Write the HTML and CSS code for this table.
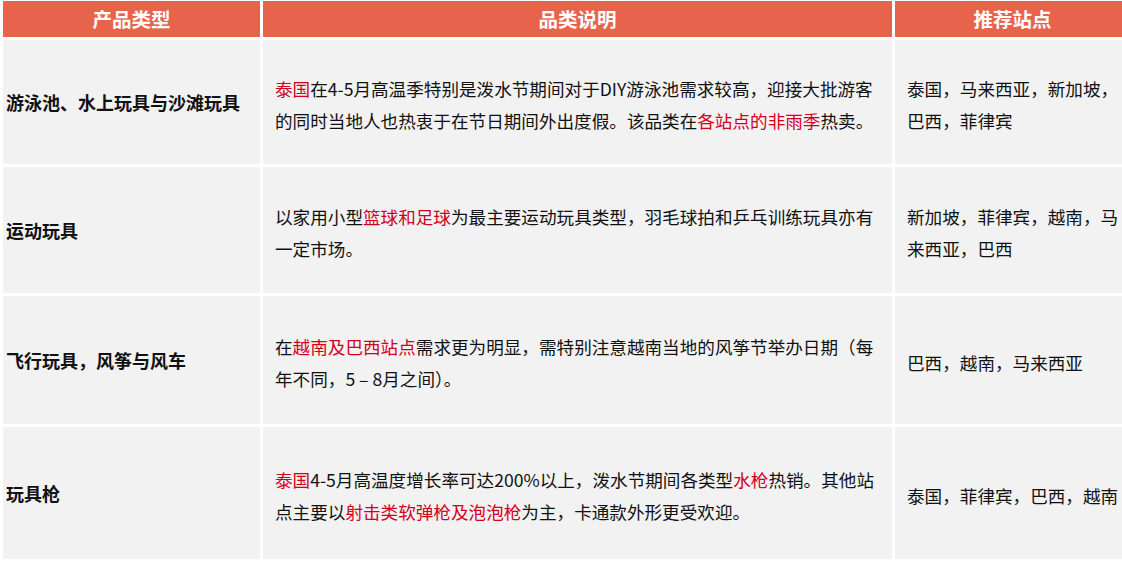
FILE: index.html
```html
<!DOCTYPE html>
<html lang="zh-CN">
<head>
<meta charset="utf-8">
<title>产品类型</title>
<link rel="stylesheet" href="styles.css">
</head>
<body>
<div class="table">
  <div class="th">产品类型</div>
  <div class="th">品类说明</div>
  <div class="th th-last">推荐站点</div>

  <div class="cell name"><p class="txt">游泳池、水上玩具与沙滩玩具</p></div>
  <div class="cell desc"><p class="txt"><span class="hl">泰国</span>在4-5月高温季特别是泼水节期间对于DIY游泳池需求较高，迎接大批游客<br>的同时当地人也热衷于在节日期间外出度假。该品类在<span class="hl">各站点的非雨季</span>热卖。</p></div>
  <div class="cell site"><p class="txt">泰国，马来西亚，新加坡，<br>巴西，菲律宾</p></div>

  <div class="cell name"><p class="txt">运动玩具</p></div>
  <div class="cell desc"><p class="txt">以家用小型<span class="hl">篮球和足球</span>为最主要运动玩具类型，羽毛球拍和乒乓训练玩具亦有<br>一定市场。</p></div>
  <div class="cell site"><p class="txt">新加坡，菲律宾，越南，马<br>来西亚，巴西</p></div>

  <div class="cell name"><p class="txt">飞行玩具，风筝与风车</p></div>
  <div class="cell desc"><p class="txt">在<span class="hl">越南及巴西站点</span>需求更为明显，需特别注意越南当地的风筝节举办日期（每<br>年不同，5 – 8月之间）。</p></div>
  <div class="cell site"><p class="txt">巴西，越南，马来西亚</p></div>

  <div class="cell name"><p class="txt">玩具枪</p></div>
  <div class="cell desc"><p class="txt"><span class="hl">泰国</span>4-5月高温度增长率可达200%以上，泼水节期间各类型<span class="hl">水枪</span>热销。其他站<br>点主要以<span class="hl">射击类软弹枪及泡泡枪</span>为主，卡通款外形更受欢迎。</p></div>
  <div class="cell site"><p class="txt">泰国，菲律宾，巴西，越南</p></div>
</div>
</body>
</html>
```

FILE: styles.css
```css
html, body {
  margin: 0;
  padding: 0;
  background: #ffffff;
}

body {
  width: 1122px;
  height: 561px;
  overflow: hidden;
  font-family: "Noto Sans CJK SC", "Noto Sans", sans-serif;
  color: #111111;
}

.table {
  display: grid;
  grid-template-columns: 257px 629px 227px;
  grid-template-rows: 36px 124px 126px 128px 132px;
  gap: 3px;
  padding: 1px 0 0 3px;
}

.th {
  background: #e8634b;
  color: #ffffff;
  font-weight: 700;
  font-size: 19.5px;
  display: flex;
  align-items: center;
  justify-content: center;
  line-height: 1;
}

.th-last {
  padding-left: 8px;
}

.cell {
  background: #f2f2f2;
  display: flex;
  align-items: center;
  white-space: nowrap;
  overflow: hidden;
}

.txt {
  margin: 0;
}

.name {
  padding-left: 3px;
  font-size: 18px;
  font-weight: 700;
}

.desc, .site {
  padding-left: 12px;
  padding-top: 5px;
  font-size: 17.6px;
  line-height: 31.5px;
}

.hl {
  color: #d3001d;
}
```
